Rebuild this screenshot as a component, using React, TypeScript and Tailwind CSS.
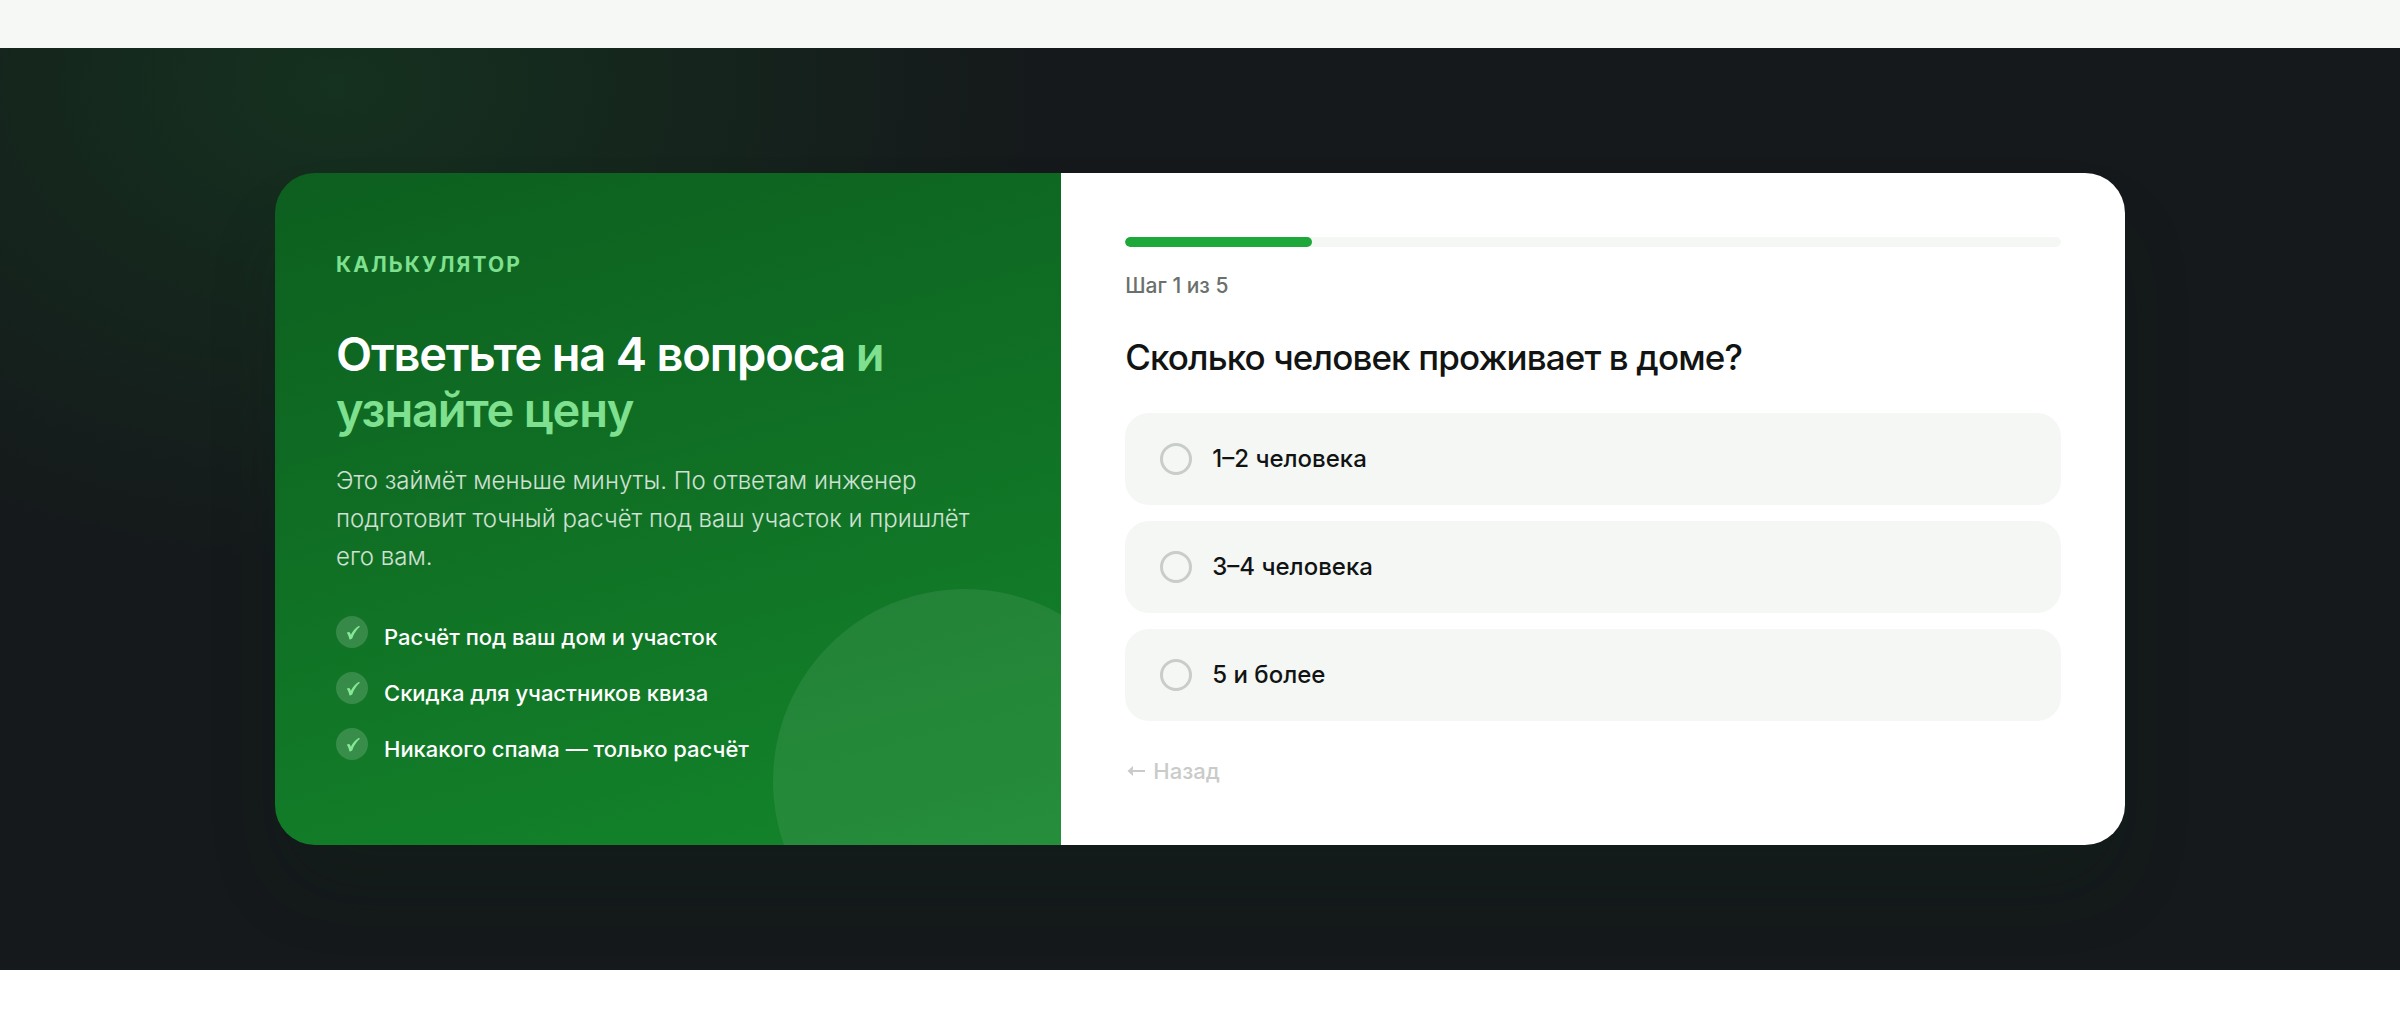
import React, { useState } from "react";
import clsx from "clsx";

const TOTAL_STEPS = 5;

const benefits = [
  "Расчёт под ваш дом и участок",
  "Скидка для участников квиза",
  "Никакого спама — только расчёт",
];

const options = [
  { id: "small", label: "1–2 человека" },
  { id: "medium", label: "3–4 человека" },
  { id: "large", label: "5 и более" },
];

const CheckIcon = () => (
  <svg viewBox="0 0 32 32" className="size-8" aria-hidden="true">
    <path
      d="M10.8 16.8c1-.9 2.2-1 2.9-.3.5.5.9 1.300 1.200 2.300 1.900-3.900 4.300-6.800 7.700-8.800l1.500.6c-3.700 3.200-6.300 7.200-7.900 12-.8.7-1.900 1-2.800 1-.4-2.400-1.200-4.800-2.600-6.800z"
      fill="#86e895"
    />
  </svg>
);

const ArrowIcon = () => (
  <svg viewBox="0 0 20 20" className="size-5" aria-hidden="true">
    <path d="M4 10h16" stroke="currentColor" strokeWidth="2" />
    <path d="M2.5 10l5.500-5v3.200L6.800 10 8 11.800V15z" fill="currentColor" />
  </svg>
);

const Intro = () => (
  <div className="relative flex flex-col justify-center overflow-hidden bg-linear-165 from-[#0d5f1f] to-[#13852b] px-6 py-12 lg:px-[61px] lg:py-16">
    <div className="absolute -right-24 -bottom-32 size-96 rounded-full bg-white/8" />
    <div className="relative">
      <p className="text-[21px] leading-[34px] font-bold tracking-widest text-[#7fe08f] uppercase">
        Калькулятор
      </p>
      <h2 className="mt-11 text-[47px] leading-[56px] font-semibold tracking-tight text-white">
        Ответьте на 4 вопроса <span className="text-[#7fe08f]">и узнайте цену</span>
      </h2>
      <p className="mt-6 max-w-[640px] text-[24px] leading-[38px] font-light text-white/80">
        Это займёт меньше минуты. По ответам инженер подготовит точный расчёт под ваш участок и
        пришлёт его вам.
      </p>
      <ul className="mt-10 flex flex-col gap-[14px]">
        {benefits.map((benefit) => (
          <li
            key={benefit}
            className="flex items-start gap-4 text-[22px] leading-[42px] font-medium text-white"
          >
            <span className="size-8 shrink-0 rounded-full bg-white/16">
              <CheckIcon />
            </span>
            {benefit}
          </li>
        ))}
      </ul>
    </div>
  </div>
);

const Quiz = () => {
  const [step, setStep] = useState(1);
  const [answer, setAnswer] = useState("");

  return (
    <form className="flex flex-col items-stretch bg-white p-6 lg:p-16">
      <div
        role="progressbar"
        aria-label="Прогресс"
        aria-valuemin={0}
        aria-valuemax={TOTAL_STEPS}
        aria-valuenow={step}
        className="h-[10px] overflow-hidden rounded-full bg-[#f5f7f5]"
      >
        <div
          className="h-full rounded-full bg-[#1fa83a]"
          style={{ width: `${(step / TOTAL_STEPS) * 100}%` }}
        />
      </div>
      <p className="mt-[22px] text-[21px] leading-[34px] font-medium text-[#6a706c]">
        Шаг {step} из {TOTAL_STEPS}
      </p>
      <h3
        id="question"
        className="mt-8 text-[35px] leading-[44px] font-medium tracking-tight text-[#111413]"
      >
        Сколько человек проживает в доме?
      </h3>
      <div role="radiogroup" aria-labelledby="question" className="mt-[34px] flex flex-col gap-4">
        {options.map(({ id, label }) => (
          <label
            key={id}
            htmlFor={id}
            className={clsx(
              "flex cursor-pointer items-center gap-5 rounded-3xl border-[3px] bg-[#f5f7f5] px-8 py-6 text-[24px] leading-[38px] font-medium text-[#111413]",
              answer === id ? "border-[#1fa83a]" : "border-transparent"
            )}
          >
            <input
              id={id}
              type="radio"
              name="people"
              value={id}
              checked={answer === id}
              onChange={() => setAnswer(id)}
              className="size-8 shrink-0 appearance-none rounded-full border-[3px] border-[#c8cdc9] checked:border-[10px] checked:border-[#1fa83a]"
            />
            {label}
          </label>
        ))}
      </div>
      <button
        type="button"
        disabled={step === 1}
        onClick={() => setStep(step - 1)}
        className="mt-10 flex items-center gap-2 self-start text-[22px] leading-5 font-medium text-[#6a706c] disabled:text-[#c9cbc9]"
      >
        <ArrowIcon />
        Назад
      </button>
    </form>
  );
};

const App = () => {
  return (
    <div className="bg-white font-['Inter',sans-serif]">
      <div className="h-12 bg-[#f5f8f5]" />
      <section className="bg-[#15191b] bg-[radial-gradient(700px_480px_at_14%_4%,#15311f,transparent)] px-4 py-16 lg:py-[125px]">
        <div className="mx-auto grid max-w-[1850px] overflow-hidden rounded-[40px] shadow-[0_48px_80px_-16px_rgba(10,44,22,0.22)] lg:grid-cols-[0.85fr_1.15fr]">
          <Intro />
          <Quiz />
        </div>
      </section>
      <div className="h-14 bg-white" />
    </div>
  );
};

export default App;
